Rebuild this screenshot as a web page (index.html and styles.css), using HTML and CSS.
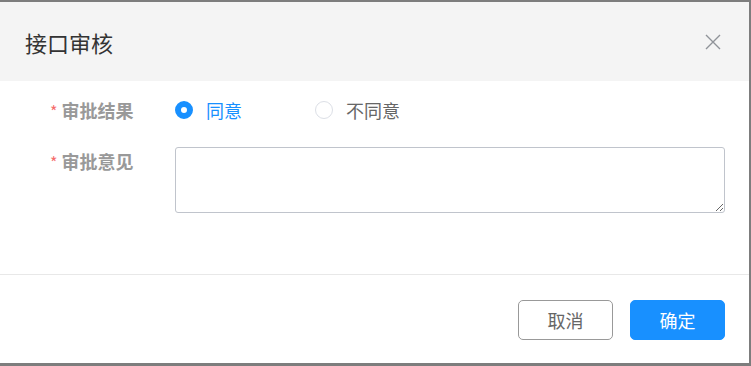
FILE: index.html
```html
<!DOCTYPE html>
<html lang="zh-CN">
<head>
  <meta charset="UTF-8">
  <title>接口审核</title>
  <link rel="stylesheet" href="styles.css">
</head>
<body>
  <div class="mask">
    <div class="dialog">
      <div class="dialog-header">
        <span class="dialog-title">接口审核</span>
        <button type="button" class="close">
          <svg width="16" height="16" viewBox="0 0 16 16">
            <path d="M1 1 L15 15 M15 1 L1 15" stroke="#909399" stroke-width="1.4" fill="none"/>
          </svg>
        </button>
      </div>
      <div class="dialog-body">
        <div class="form-item">
          <label class="form-label"><span class="required">*</span>审批结果</label>
          <div class="radio-group">
            <label class="radio checked"><span class="radio-dot"></span>同意</label>
            <label class="radio"><span class="radio-dot"></span>不同意</label>
          </div>
        </div>
        <div class="form-item top">
          <label class="form-label"><span class="required">*</span>审批意见</label>
          <textarea class="textarea"></textarea>
        </div>
      </div>
      <div class="dialog-footer">
        <button type="button" class="btn">取消</button>
        <button type="button" class="btn primary">确定</button>
      </div>
    </div>
  </div>
</body>
</html>
```

FILE: styles.css
```css
body {
  margin: 0;
  padding: 0;
  font-family: "Noto Sans CJK SC", "Liberation Sans", sans-serif;
  background-color: #7d7d7d;
}

.mask {
  width: 751px;
  height: 366px;
  padding-top: 2px;
  box-sizing: border-box;
}

.dialog {
  width: 749px;
  height: 361px;
  background-color: #fff;
}

.dialog-header {
  height: 79px;
  background-color: #f4f4f4;
  display: flex;
  align-items: center;
  justify-content: space-between;
  padding: 0 28px 0 25px;
}

.dialog-title {
  font-size: 22px;
  color: #333;
}

.close {
  border: none;
  background: none;
  padding: 0;
  width: 16px;
  height: 16px;
  display: flex;
  cursor: pointer;
}

.dialog-body {
  padding: 9px 0 0 0;
  height: 184px;
  border-bottom: 1px solid #e8e8e8;
}

.form-item {
  display: flex;
  align-items: center;
  height: 40px;
  margin-bottom: 17px;
}

.form-item.top {
  align-items: flex-start;
  height: auto;
}

.form-label {
  width: 125px;
  margin-left: 50px;
  font-size: 18px;
  font-weight: bold;
  color: #999;
  line-height: 26px;
}

.form-item.top .form-label {
  margin-top: 1px;
}

.required {
  color: #f56c6c;
  font-weight: normal;
  font-size: 16px;
  margin-right: 4px;
}

.radio-group {
  display: flex;
}

.radio {
  display: flex;
  align-items: center;
  width: 140px;
  font-size: 18px;
  color: #666;
  cursor: pointer;
}

.radio-dot {
  width: 16px;
  height: 16px;
  border: 1px solid #dcdfe6;
  border-radius: 50%;
  margin-right: 13px;
  box-sizing: content-box;
}

.radio.checked {
  color: #1890ff;
}

.radio.checked .radio-dot {
  border: 6px solid #1890ff;
  width: 6px;
  height: 6px;
}

.textarea {
  width: 550px;
  height: 66px;
  box-sizing: border-box;
  border: 1px solid #c0c4cc;
  border-radius: 3px;
  padding: 5px 10px;
  font-family: inherit;
  font-size: 14px;
  margin: 0;
}

.dialog-footer {
  display: flex;
  justify-content: flex-end;
  gap: 17px;
  padding: 25px 24px 0 0;
}

.btn {
  width: 95px;
  height: 40px;
  font-family: inherit;
  font-size: 18px;
  color: #666;
  background-color: #fff;
  border: 1px solid #999;
  border-radius: 5px;
  cursor: pointer;
}

.btn.primary {
  color: #fff;
  background-color: #1890ff;
  border-color: #1890ff;
}
```
